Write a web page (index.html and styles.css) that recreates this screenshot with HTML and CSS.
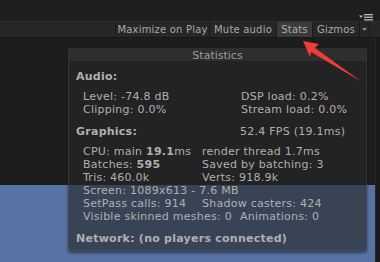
FILE: index.html
```html
<!DOCTYPE html>
<html lang="en">
<head>
    <meta charset="UTF-8">
    <meta name="viewport" content="width=device-width, initial-scale=1.0">
    <title>Game View Stats</title>
    <link rel="stylesheet" href="styles.css">
</head>
<body>
    <div class="window">
        <div class="titlebar">
            <svg class="menu-icon" width="14" height="7" viewBox="0 0 14 7">
                <path d="M0 1.5h4l-2 2.5z" fill="#b8b8b8"/>
                <rect x="5" y="0" width="9" height="1.3" fill="#b8b8b8"/>
                <rect x="5" y="2.6" width="9" height="1.3" fill="#b8b8b8"/>
                <rect x="5" y="5.2" width="9" height="1.3" fill="#b8b8b8"/>
            </svg>
        </div>

        <div class="toolbar">
            <div class="spacer"></div>
            <div class="tool-btn btn-maximize">Maximize on Play</div>
            <div class="tool-btn btn-mute">Mute audio</div>
            <div class="tool-btn btn-stats active">Stats</div>
            <div class="tool-btn btn-gizmos">Gizmos</div>
            <div class="tool-btn btn-dropdown">
                <svg width="5" height="3" viewBox="0 0 5 3"><path d="M0 0h5l-2.5 3z" fill="#8a8a8a"/></svg>
            </div>
            <div class="toolbar-end"></div>
        </div>

        <div class="viewport">
            <div class="scene">
                <div class="scene-dark"></div>
                <div class="scene-sky"></div>
            </div>
            <div class="scrollbar"></div>

            <div class="stats">
                <div class="stats-header">Statistics</div>
                <div class="stats-body">
                    <div class="section-head audio-head">
                        <span class="bold">Audio:</span>
                    </div>
                    <div class="rows">
                        <div class="row audio-row"><span>Level: -74.8 dB</span><span>DSP load: 0.2%</span></div>
                        <div class="row audio-row"><span>Clipping: 0.0%</span><span>Stream load: 0.0%</span></div>
                    </div>

                    <div class="section-head graphics-head">
                        <span class="bold">Graphics:</span>
                        <span>52.4 FPS (19.1ms)</span>
                    </div>
                    <div class="rows">
                        <div class="row gfx-row"><span>CPU: main <b>19.1</b>ms</span><span>render thread 1.7ms</span></div>
                        <div class="row gfx-row"><span>Batches: <b>595</b></span><span>Saved by batching: 3</span></div>
                        <div class="row gfx-row"><span>Tris: 460.0k</span><span>Verts: 918.9k</span></div>
                        <div class="row"><span>Screen: 1089x613 - 7.6 MB</span></div>
                        <div class="row gfx-row"><span>SetPass calls: 914</span><span>Shadow casters: 424</span></div>
                        <div class="row split-row"><span>Visible skinned meshes: 0</span><span>Animations: 0</span></div>
                    </div>

                    <div class="section-head network-head">
                        <span class="bold">Network: (no players connected)</span>
                    </div>
                </div>
            </div>
        </div>

        <svg class="callout" width="380" height="262" viewBox="0 0 380 262">
            <polygon points="303,41 319,44 315,48 362,82 311,52 310,57" fill="#ee3b3b"/>
        </svg>
    </div>
</body>
</html>
```

FILE: styles.css
```css
* {
    box-sizing: border-box;
}
body {
    margin: 0;
    background: #1c1c1c;
    font-family: 'DejaVu Sans', 'Liberation Sans', sans-serif;
    color: #b0b0b0;
}
.window {
    position: relative;
    width: 380px;
    height: 262px;
    overflow: hidden;
    display: flex;
    flex-direction: column;
}

/* top strip */
.titlebar {
    height: 21px;
    background: #1f1f1f;
    display: flex;
    justify-content: flex-end;
    align-items: flex-start;
    padding: 14px 7px 0 0;
}

/* toolbar */
.toolbar {
    height: 17px;
    display: flex;
    background: #272727;
    border-top: 1px solid #2c2c2c;
    border-bottom: 1px solid #171717;
    font-size: 10px;
    line-height: 15px;
    color: #a9a9a9;
    letter-spacing: 0.2px;
}
.spacer {
    width: 115px;
}
.tool-btn {
    border-left: 1px solid #1a1a1a;
    text-align: center;
    white-space: nowrap;
}
.btn-maximize { width: 94px; }
.btn-mute { width: 67px; }
.btn-stats { width: 36px; }
.btn-gizmos { width: 47px; }
.btn-dropdown {
    width: 11px;
    display: flex;
    align-items: center;
    justify-content: center;
    border-right: 1px solid #1a1a1a;
}
.tool-btn.active {
    background: #3b3b3b;
}
.toolbar-end {
    flex: 1;
}

/* scene */
.viewport {
    position: relative;
    flex: 1;
    display: flex;
}
.scene {
    flex: 1;
    display: flex;
    flex-direction: column;
}
.scene-dark {
    height: 147px;
    background: #1d1d1d;
}
.scene-sky {
    flex: 1;
    background: #5673a3;
}
.scrollbar {
    width: 5px;
    background: #1a1a1a;
    border-left: 1px solid #262626;
}

/* stats overlay */
.stats {
    position: absolute;
    top: 10px;
    left: 68px;
    width: 299px;
    background: rgba(38, 38, 38, 0.62);
    border: 1px solid rgba(90, 90, 90, 0.35);
    border-top: none;
    border-radius: 3px;
    box-shadow: 0 2px 3px rgba(0, 0, 0, 0.45);
    font-size: 11px;
    line-height: 13px;
    letter-spacing: 0.25px;
}
.stats-header {
    height: 14px;
    padding-top: 1px;
    background: #2e2e2e;
    border-radius: 3px 3px 0 0;
    border-bottom: 1px solid #222;
    text-align: center;
    color: #9c9c9c;
    letter-spacing: 0;
}
.stats-body {
    padding: 8px 0 5px 7px;
}
.bold,
.stats b {
    font-weight: bold;
}
.section-head {
    display: grid;
    grid-template-columns: 164px 1fr;
    white-space: nowrap;
}
.graphics-head,
.network-head {
    margin-top: 9px;
}
.rows {
    margin: 7px 0 0 7px;
}
.row {
    white-space: nowrap;
}
.audio-row {
    display: grid;
    grid-template-columns: 158px 1fr;
}
.gfx-row {
    display: grid;
    grid-template-columns: 119px 1fr;
}
.split-row {
    display: flex;
    gap: 8px;
}

.callout {
    position: absolute;
    top: 0;
    left: 0;
    pointer-events: none;
}
```
